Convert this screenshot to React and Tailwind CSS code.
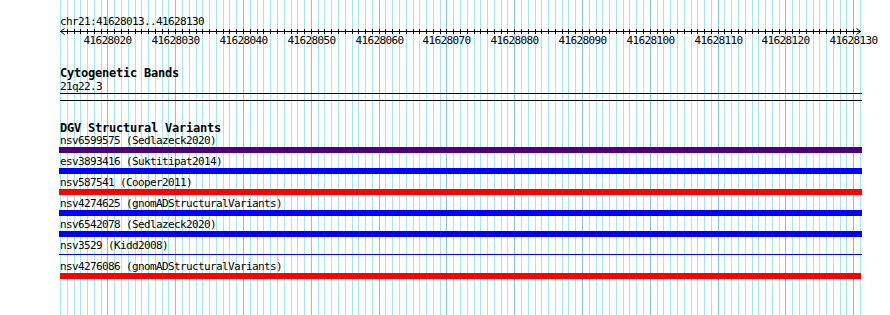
import React from "react";

const SCALE = 800 / 118;
const gx = (i) => Math.round(60 + i * SCALE) + 0.5;

const MONO = "font-[family-name:'DejaVu_Sans_Mono',monospace]";

function Grid() {
  const lines = [];
  for (let i = 0; i <= 118; i++) {
    const major = (13 + i) % 10 === 0;
    lines.push(
      <line
        key={i}
        x1={gx(i)}
        x2={gx(i)}
        y1={0}
        y2={315}
        stroke={major ? "#86c2e4" : "#a6e6ee"}
        strokeWidth={1}
      />
    );
  }
  return (
    <svg
      className="absolute inset-0"
      width="890"
      height="315"
      shapeRendering="crispEdges"
    >
      {lines}
    </svg>
  );
}

function Ruler() {
  const ticks = [];
  const labels = [];
  for (let i = 1; i <= 117; i++) {
    ticks.push(
      <line key={i} x1={gx(i)} x2={gx(i)} y1={1} y2={6} stroke="#000" strokeWidth={1} shapeRendering="crispEdges" />
    );
    if ((13 + i) % 10 === 0) {
      labels.push(
        <text
          key={"l" + i}
          x={gx(i)}
          y={16}
          textAnchor="middle"
          fontSize="11"
          letterSpacing="-0.62"
          fontFamily="'DejaVu Sans Mono', monospace"
          fill="#000"
        >
          {41628013 + i}
        </text>
      );
    }
  }
  return (
    <svg className="block -ml-[60px] overflow-visible" width="890" height="20">
      <line x1={60} x2={861} y1={3.5} y2={3.5} stroke="#000" strokeWidth={1} shapeRendering="crispEdges" />
      <polyline points="64.5,0.5 60.5,3.5 64.5,6.5" fill="none" stroke="#000" strokeWidth={1} />
      <polyline points="856.5,0.5 860.5,3.5 856.5,6.5" fill="none" stroke="#000" strokeWidth={1} />
      {ticks}
      {labels}
    </svg>
  );
}

const rows = [
  { label: "nsv6599575 (Sedlazeck2020)", kind: "indigo" },
  { label: "esv3893416 (Suktitipat2014)", kind: "blue" },
  { label: "nsv587541 (Cooper2011)", kind: "red" },
  { label: "nsv4274625 (gnomADStructuralVariants)", kind: "blue" },
  { label: "nsv6542078 (Sedlazeck2020)", kind: "blue" },
  { label: "nsv3529 (Kidd2008)", kind: "thin" },
  { label: "nsv4276086 (gnomADStructuralVariants)", kind: "redshort" },
];

const SMALL = `text-[11px] tracking-[-0.62px] whitespace-nowrap ${MONO}`;
const BOLD = `text-[12px] tracking-[-0.22px] font-bold whitespace-nowrap ${MONO}`;

function Feature({ label, kind }) {
  let bar;
  if (kind === "indigo") bar = <div className="-ml-px w-[803px] h-[6px] bg-[#4b0082]" />;
  else if (kind === "blue") bar = <div className="-ml-px w-[803px] h-[6px] bg-[#0000ff]" />;
  else if (kind === "red") bar = <div className="-ml-px w-[803px] h-[6px] bg-[#ff0000]" />;
  else if (kind === "thin")
    bar = (
      <div className="h-[6px] pt-[2px]">
        <div className="-ml-px w-[803px] h-px bg-[#0000ff]" />
      </div>
    );
  else bar = <div className="w-[801px] h-[6px] bg-[#ff0000]" />;
  return (
    <div className="h-[21px]">
      <div className={`h-[12px] leading-[12px] ${SMALL}`}>{label}</div>
      {bar}
    </div>
  );
}

export default function App() {
  return (
    <div className="relative w-[890px] h-[315px] bg-white overflow-hidden text-black">
      <Grid />
      <div className="relative pl-[60px] pt-[15px]">
        <div className={`h-[13px] leading-[13px] ${SMALL}`}>chr21:41628013..41628130</div>
        <Ruler />
        <div className={`mt-[19px] h-[13px] leading-[13px] ${BOLD}`}>Cytogenetic Bands</div>
        <div className={`mt-px h-[12px] leading-[12px] ${SMALL}`}>21q22.3</div>
        <div className="w-[802px] h-px bg-black" />
        <div className="mt-[6px] w-[802px] h-px bg-black" />
        <div className={`mt-[21px] h-[13px] leading-[13px] ${BOLD}`}>DGV Structural Variants</div>
        {rows.map((r) => (
          <Feature key={r.label} {...r} />
        ))}
      </div>
    </div>
  );
}
